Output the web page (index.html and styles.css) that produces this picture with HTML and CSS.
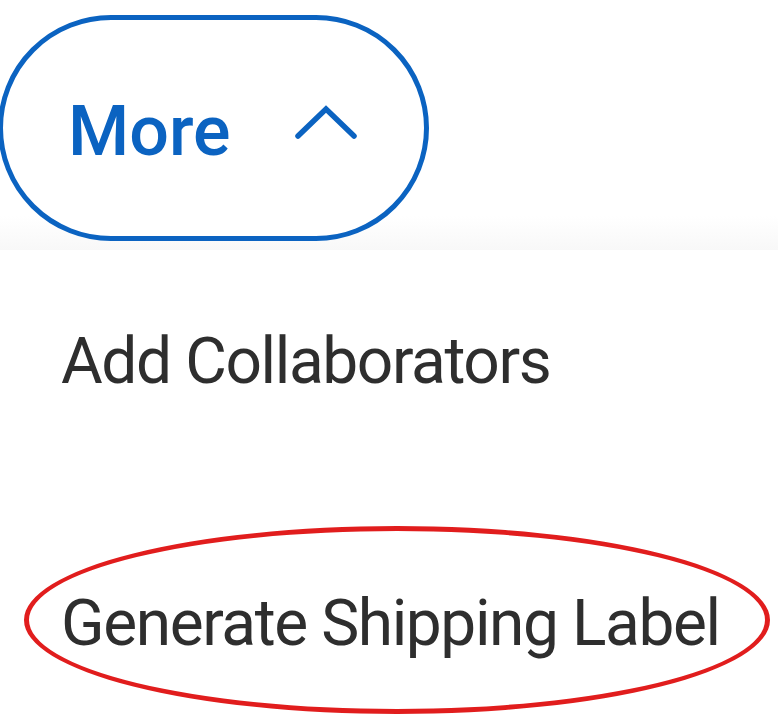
FILE: index.html
```html
<!DOCTYPE html>
<html lang="en">
<head>
<meta charset="utf-8">
<title>More menu</title>
<link rel="stylesheet" href="styles.css">
</head>
<body>
<div class="page">
  <header class="top">
    <button class="more-btn" type="button">
      <span class="more-label">More</span>
      <svg class="chevron" width="70" height="44" viewBox="0 0 70 44" aria-hidden="true">
        <polyline points="4,37 32,10 60,37" fill="none" stroke="currentColor" stroke-width="5.5" stroke-linecap="round" stroke-linejoin="miter"/>
      </svg>
    </button>
  </header>
  <ul class="menu">
    <li class="menu-item">Add Collaborators</li>
    <li class="menu-item highlighted">Generate Shipping Label<span class="circle"></span></li>
  </ul>
</div>
</body>
</html>
```

FILE: styles.css
```css
html, body {
  margin: 0;
  padding: 0;
  background: #ffffff;
}

body {
  width: 778px;
  height: 714px;
  overflow: hidden;
  font-family: Roboto, "Liberation Sans", sans-serif;
}

.page {
  display: flex;
  flex-direction: column;
}

.top {
  height: 250px;
  box-sizing: border-box;
  padding-top: 15px;
  background: linear-gradient(to bottom, #ffffff 0, #ffffff 216px, #f8f8f8 250px);
}

.more-btn {
  margin-left: -2px;
  width: 431px;
  height: 226px;
  box-sizing: border-box;
  border: 5px solid #0b63c1;
  border-radius: 113px;
  background: #ffffff;
  color: #0b63c1;
  display: flex;
  align-items: center;
  padding: 0 0 0 65px;
  font-family: Roboto, "Liberation Sans", sans-serif;
  cursor: pointer;
}

.more-label {
  font-size: 70px;
  font-weight: 500;
  line-height: 1;
  margin-top: 5px;
}

.chevron {
  margin-left: 63px;
  margin-top: -14px;
  display: block;
}

.menu {
  list-style: none;
  margin: 0;
  padding: 73px 0 0 61px;
  display: flex;
  flex-direction: column;
  gap: 185px;
}

.menu-item {
  font-size: 64px;
  line-height: 77px;
  color: #2e2e2e;
  letter-spacing: -1.4px;
  white-space: nowrap;
}

.highlighted {
  position: relative;
}

.circle {
  position: absolute;
  left: -37px;
  top: -59px;
  width: 746px;
  height: 188px;
  box-sizing: border-box;
  border: 5px solid #e11d1d;
  border-radius: 50%;
  pointer-events: none;
}
```
